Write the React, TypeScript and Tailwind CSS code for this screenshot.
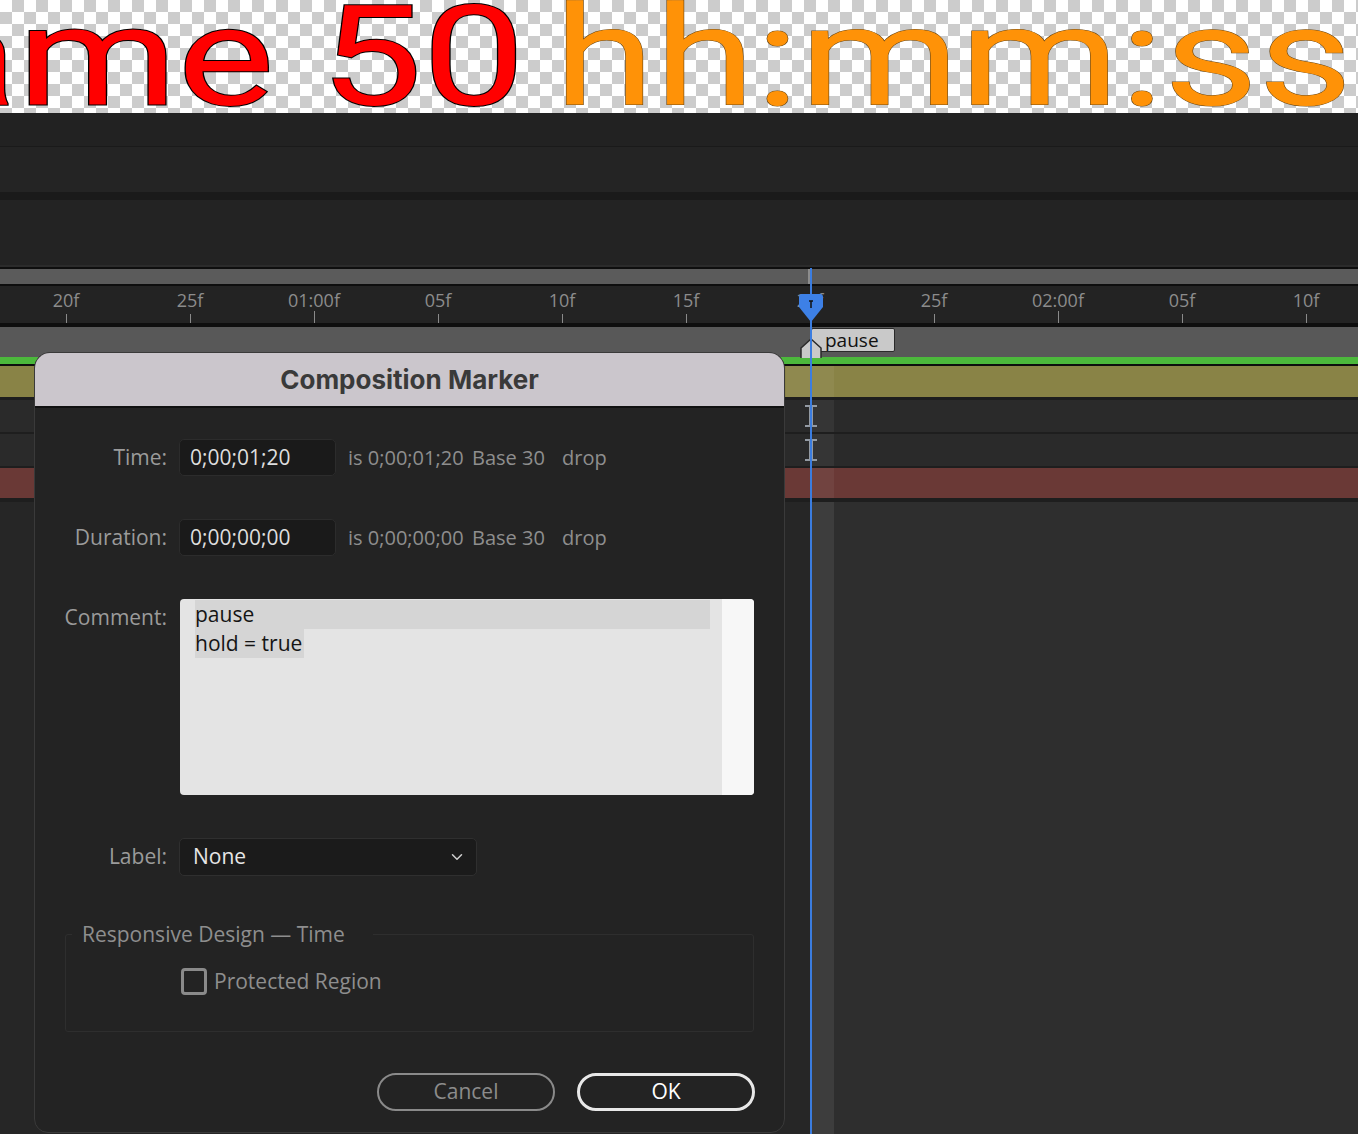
import { ChevronDown } from "lucide-react";

const rulerLabels = ["20f", "25f", "01:00f", "05f", "10f", "15f", "20f", "25f", "02:00f", "05f", "10f"];

function IBeam() {
  return (
    <svg width="16" height="24" viewBox="0 0 16 24" className="absolute left-[803px] top-[4px]">
      <path d="M2 2H14M2 22H14" stroke="#939aa3" strokeWidth="2" fill="none" />
      <path d="M8 2V22" stroke="#939aa3" strokeWidth="4" fill="none" />
    </svg>
  );
}

function FieldRow({ label, value, info }: { label: string; value: string; info: string }) {
  return (
    <div className="flex items-center h-[37px]">
      <div className="w-[144px] pr-[12px] text-right text-[#9b9b9b]">{label}</div>
      <div className="w-[157px] h-[37px] flex items-center pl-[10px] bg-[#1a1a1a] border border-[#2c2c2c] rounded-[5px] text-[#dedede]">
        {value}
      </div>
      <div className="flex items-center ml-[12px] text-[20px] text-[#8e8e8e]">
        <span className="w-[124px]">{info}</span>
        <span className="w-[90px]">Base 30</span>
        <span>drop</span>
      </div>
    </div>
  );
}

export default function App() {
  return (
    <div className="relative w-[1358px] h-[1134px] overflow-hidden flex flex-col bg-[#262626] font-['Open_Sans',sans-serif] text-[21px]">
      {/* preview strip */}
      <div className="relative h-[113px] shrink-0 overflow-hidden bg-[image:repeating-conic-gradient(#cccccc_0_25%,#ffffff_0_50%)] bg-[length:24px_24px]">
        <div className="absolute left-[-82px] top-[-13px] origin-left scale-x-[1.305] whitespace-nowrap font-['Roboto',sans-serif] text-[140px] leading-[140px]">
          <span className="text-[#ff0000] [-webkit-text-stroke:2px_#000] [paint-order:stroke_fill]">ame 50</span>
          <span className="ml-[22px] text-[#ff9207] [-webkit-text-stroke:1px_#6e4a16] [paint-order:stroke_fill]">hh:mm:ss</span>
        </div>
      </div>

      {/* panels above timeline */}
      <div className="h-[33px] shrink-0 bg-[#222222]" />
      <div className="h-[1px] shrink-0 bg-[#1a1a1a]" />
      <div className="h-[45px] shrink-0 bg-[#242424]" />
      <div className="h-[8px] shrink-0 bg-[#1a1a1a]" />
      <div className="h-[65px] shrink-0 bg-[#232323]" />
      <div className="h-[2px] shrink-0 bg-[#2b2b2b]" />
      <div className="h-[2px] shrink-0 bg-[#0e0e0e]" />
      <div className="relative h-[15px] shrink-0 bg-[#5b5b5b]">
        <div className="absolute left-[808px] top-0 w-[2px] h-[15px] bg-[#8c8c8c]" />
      </div>
      <div className="h-[2px] shrink-0 bg-[#0e0e0e]" />

      {/* ruler */}
      <div className="h-[37px] shrink-0 bg-[#232323] flex pl-[4px]">
        {rulerLabels.map((l, i) => (
          <div key={i} className="w-[124px] shrink-0 h-full flex flex-col items-center justify-between pt-[3px]">
            <span className="text-[18px] leading-[22px] text-[#8c8c8c]">{l}</span>
            <span className={`w-px bg-[#8a8a8a] ${l.includes(":") ? "h-[14px]" : "h-[9px]"}`} />
          </div>
        ))}
      </div>
      <div className="h-[4px] shrink-0 bg-[#0e0e0e]" />

      {/* marker row */}
      <div className="relative h-[30px] shrink-0 bg-[#585858]">
        <div className="absolute left-[811px] top-[1px] w-[84px] h-[24px] bg-[#c9c9c9] border border-[#2a2a2a] rounded-[2px] pl-[13px] text-[19px] leading-[22px] text-[#111]">
          pause
        </div>
        <svg width="24" height="20" viewBox="0 0 24 20" className="absolute left-[799px] top-[11px]">
          <path d="M2 20V10L12 1L22 10V20" fill="#c9c9c9" stroke="#2a2a2a" strokeWidth="1.5" />
        </svg>
      </div>
      <div className="h-[7px] shrink-0 bg-[#4cb83c]" />
      <div className="h-[2px] shrink-0 bg-[#0e0e0e]" />

      {/* layers */}
      <div className="relative h-[31px] shrink-0 bg-[#898346]">
        <div className="absolute left-[786px] top-0 w-[48px] h-full bg-white/[0.05]" />
      </div>
      <div className="h-[3px] shrink-0 bg-[#1e1e1e]" />
      <div className="relative h-[32px] shrink-0 bg-[#2a2a2a]">
        <div className="absolute left-[810px] top-0 w-[24px] h-full bg-white/[0.05]" />
        <IBeam />
      </div>
      <div className="h-[2px] shrink-0 bg-[#1e1e1e]" />
      <div className="relative h-[32px] shrink-0 bg-[#2a2a2a]">
        <div className="absolute left-[810px] top-0 w-[24px] h-full bg-white/[0.05]" />
        <IBeam />
      </div>
      <div className="h-[2px] shrink-0 bg-[#1e1e1e]" />
      <div className="relative h-[30px] shrink-0 bg-[#6a3936]">
        <div className="absolute left-[810px] top-0 w-[24px] h-full bg-white/[0.05]" />
      </div>
      <div className="h-[4px] shrink-0 bg-[#1e1e1e]" />
      <div className="flex-1 flex">
        <div className="w-[810px] bg-[#262626]" />
        <div className="w-[24px] bg-[#3d3d3d]" />
        <div className="flex-1 bg-[#2e2e2e]" />
      </div>

      {/* playhead */}
      <div className="absolute left-[810px] top-[268px] w-[2px] h-[866px] bg-[#3b7de0]" />
      <svg width="26" height="30" viewBox="0 0 26 30" className="absolute left-[798px] top-[293px]">
        <path d="M1 4Q1 1 4 1H22Q25 1 25 4V14L13 29L1 14Z" fill="#3d80e6" />
        <path d="M11 8H15M13 8V15" stroke="#111" strokeWidth="1.5" fill="none" />
      </svg>

      {/* dialog */}
      <div className="absolute left-[34px] top-[352px] w-[751px] h-[781px] flex flex-col bg-[#232323] border border-[#3a3a3a] rounded-t-[16px] rounded-b-[14px] overflow-hidden">
        <div className="h-[55px] shrink-0 flex items-center justify-center bg-[#cbc6cc] border-b-2 border-[#111] font-['Inter',sans-serif] font-bold text-[26px] text-[#3a3a3a]">
          Composition Marker
        </div>
        <div className="flex flex-col pt-[31px]">
          <FieldRow label="Time:" value="0;00;01;20" info="is 0;00;01;20" />
          <div className="mt-[43px]">
            <FieldRow label="Duration:" value="0;00;00;00" info="is 0;00;00;00" />
          </div>

          <div className="mt-[43px] flex items-start">
            <div className="w-[144px] pr-[12px] pt-[4px] text-right text-[#9b9b9b] leading-[28px]">Comment:</div>
            <div className="ml-[1px] w-[574px] h-[196px] flex bg-[#e4e4e4] rounded-[4px] overflow-hidden">
              <div className="flex-1 pl-[15px] pt-[1px] text-[21px] leading-[29px] text-[#141414]">
                <div className="w-[515px] bg-[#d5d5d5]">pause</div>
                <div className="inline-block bg-[#d5d5d5] pr-[2px]">hold = true</div>
              </div>
              <div className="w-[32px] bg-[#f7f7f7]" />
            </div>
          </div>

          <div className="mt-[43px] flex items-center h-[38px]">
            <div className="w-[144px] pr-[12px] text-right text-[#9b9b9b]">Label:</div>
            <div className="w-[298px] h-[38px] flex items-center justify-between pl-[13px] pr-[10px] bg-[#1b1b1b] border border-[#2f2f2f] rounded-[5px] text-[#e6e6e6] font-medium">
              <span>None</span>
              <ChevronDown size={18} strokeWidth={2} color="#d0d0d0" />
            </div>
          </div>

          <fieldset className="mt-[44px] mx-[30px] border border-[#2e2e2e] rounded-[3px] pb-[36px]">
            <legend className="ml-[6px] pl-[10px] pr-[28px] leading-[28px] text-[#8e8e8e]">Responsive Design — Time</legend>
            <div className="mt-[20px] ml-[115px] flex items-center h-[27px]">
              <span className="w-[26px] h-[27px] border-[3px] border-[#8a8a8a] rounded-[4px]" />
              <span className="ml-[7px] text-[#8e8e8e]">Protected Region</span>
            </div>
          </fieldset>

          <div className="mt-[41px] flex justify-end gap-[22px] pr-[29px]">
            <button className="w-[178px] h-[38px] rounded-full border-2 border-[#8a8a8a] text-[#8c8c8c] text-[21px]">Cancel</button>
            <button className="w-[178px] h-[38px] rounded-full border-[3px] border-[#e8e8e8] text-white text-[21px]">OK</button>
          </div>
        </div>
      </div>
    </div>
  );
}
